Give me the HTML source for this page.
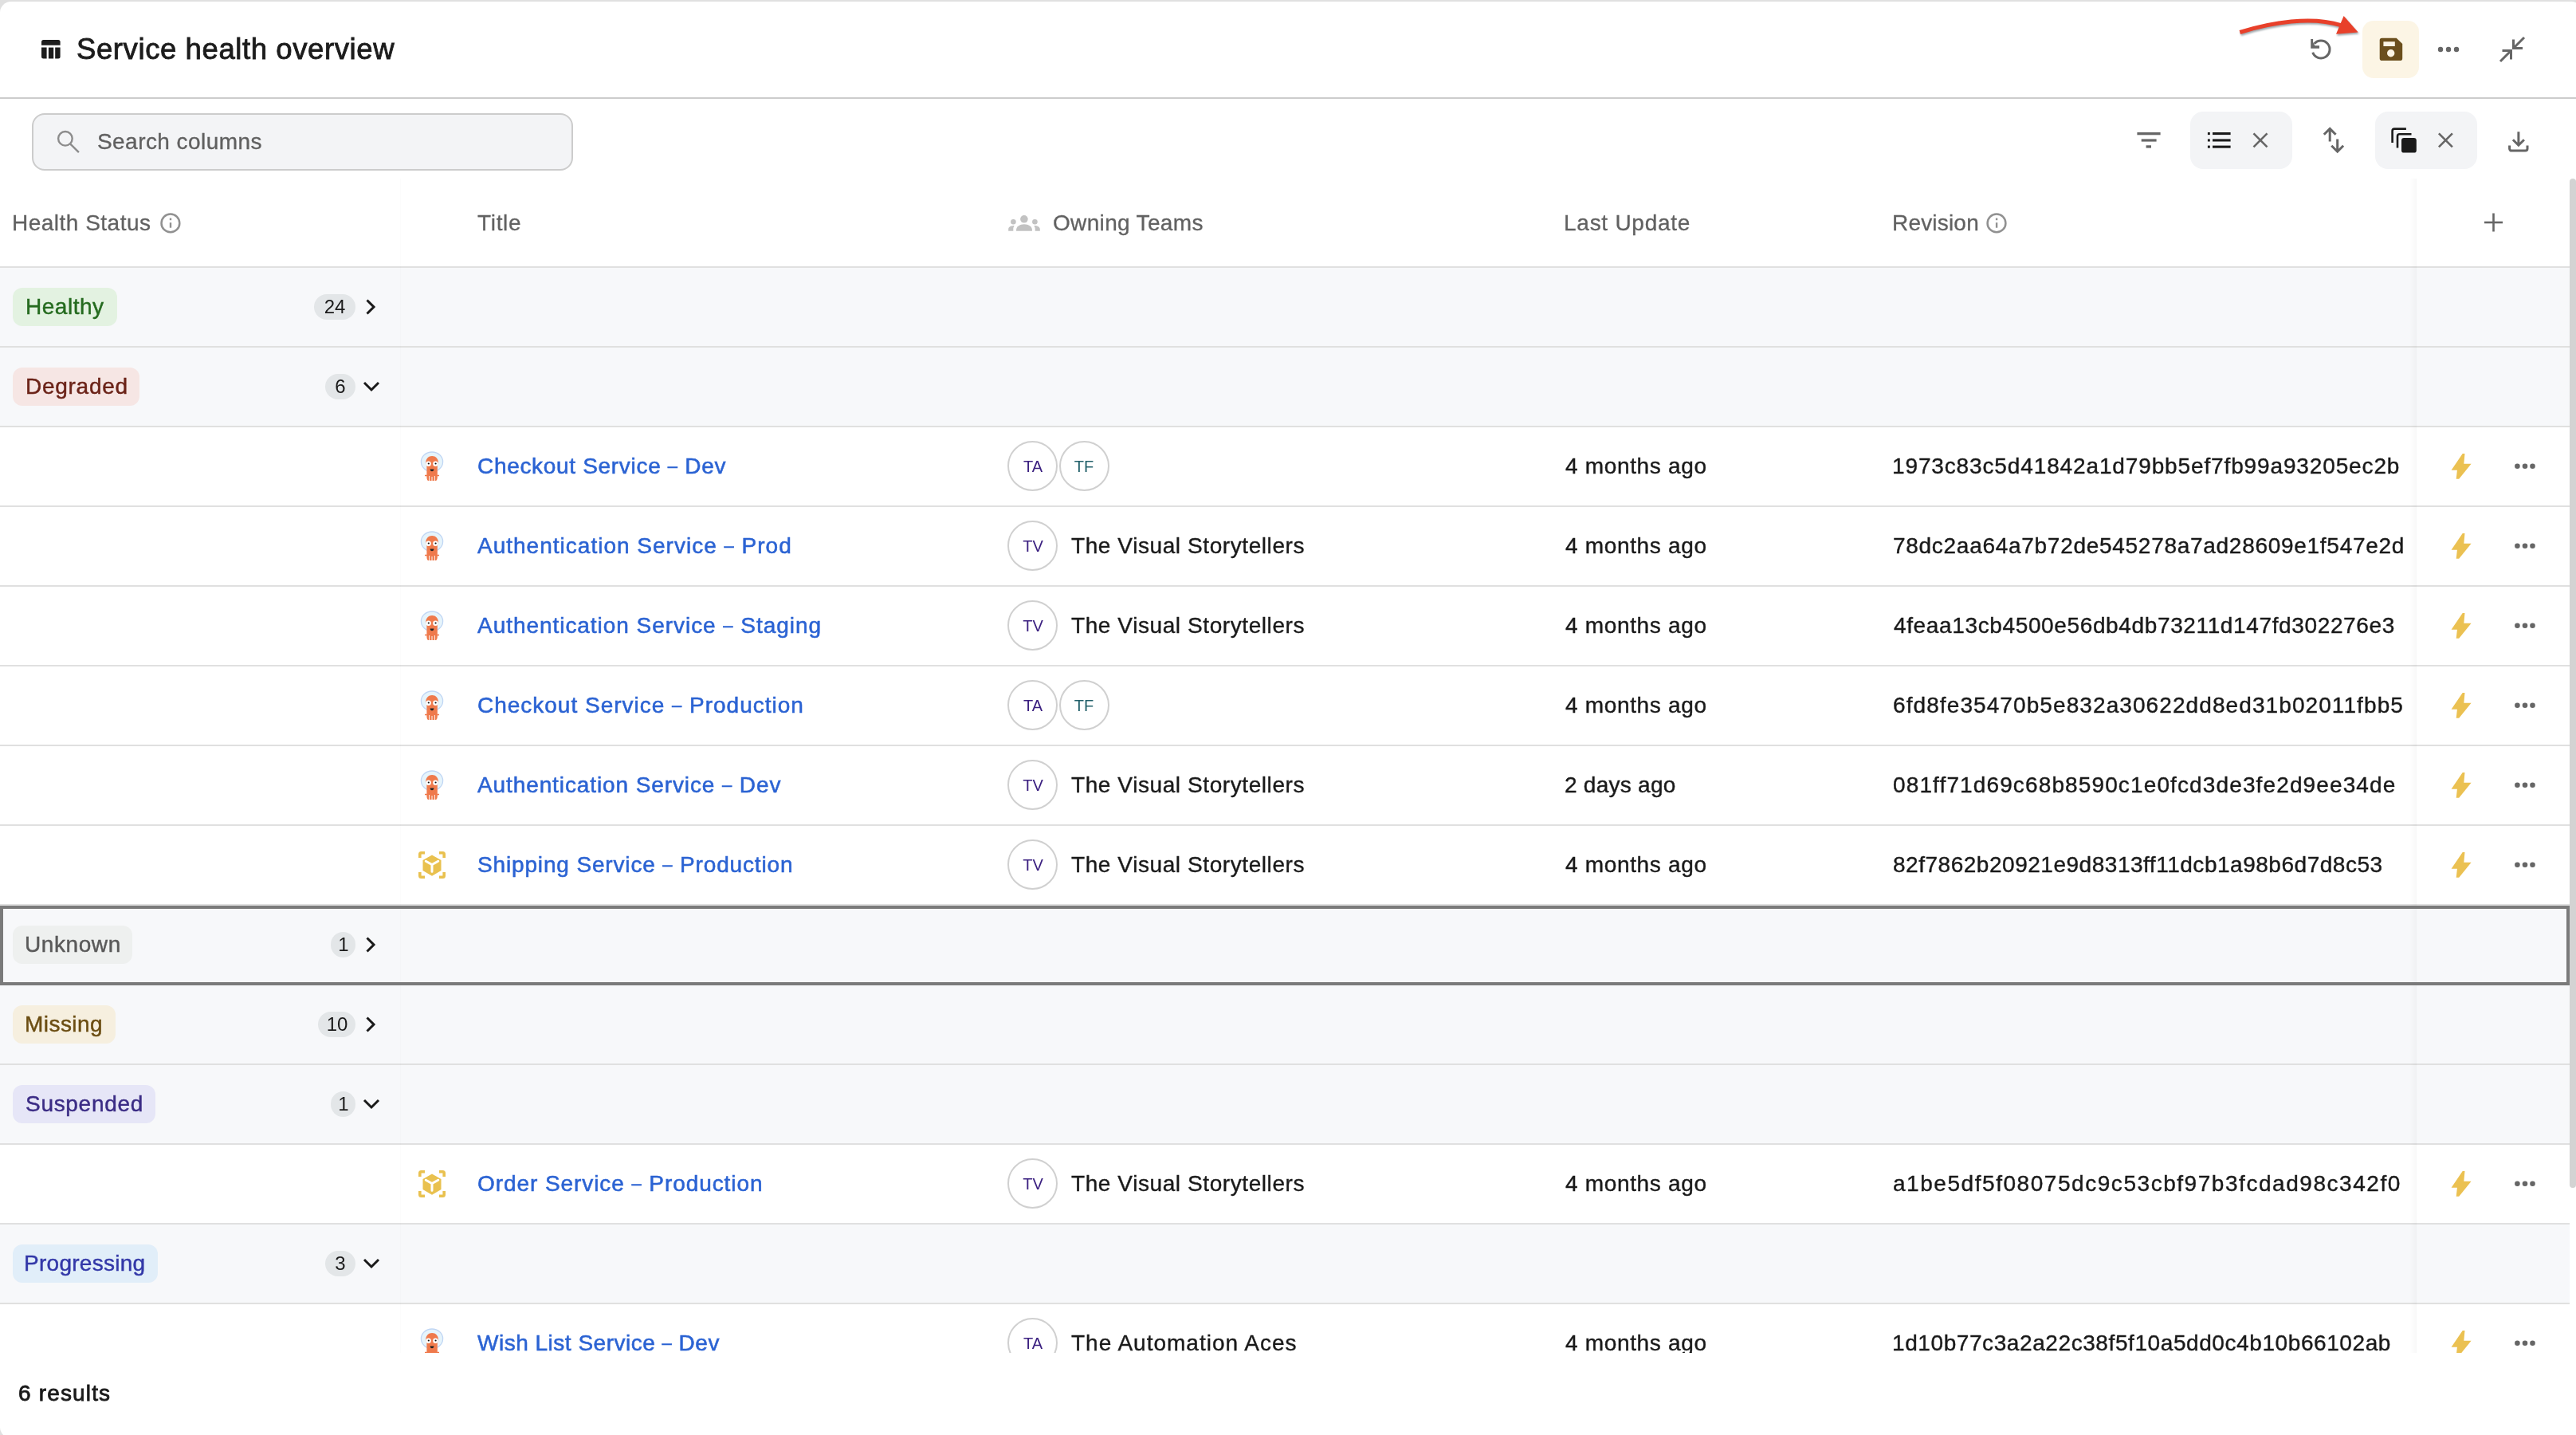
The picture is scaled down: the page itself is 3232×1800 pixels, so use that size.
<!DOCTYPE html>
<html><head><meta charset="utf-8"><title>Service health overview</title>
<style>
html,body{margin:0;padding:0;width:3232px;height:1800px;overflow:hidden;background:#e0e0e0;font-family:"Liberation Sans", sans-serif;}
.t{position:absolute;white-space:pre;line-height:1;will-change:transform;}
.r{position:absolute;}
.d{font-size:22px;vertical-align:2px;}
.a{position:absolute;left:0;top:0;overflow:visible;}
.clip{position:absolute;left:0;top:0;width:3232px;height:1697px;overflow:hidden;}
</style></head><body>
<div class="r" style="left:0;top:2px;width:3240px;height:1802px;background:#fff;border-radius:14px 14px 0 14px"></div><svg class="a" width="3232" height="130" viewBox="0 0 3232 130">
<path d="M52 56.7V52.5a2.5 2.5 0 0 1 2.5-2.5h18.6a2.5 2.5 0 0 1 2.5 2.5v4.2z" fill="#1c1c1c"/>
<path d="M52 59.6h6.6v13.9h-4.1a2.5 2.5 0 0 1-2.5-2.5z" fill="#1c1c1c"/>
<rect x="60.9" y="59.6" width="6.3" height="13.9" fill="#1c1c1c"/>
<path d="M69.2 59.6h6.4v11.4a2.5 2.5 0 0 1-2.5 2.5h-3.9z" fill="#1c1c1c"/>
<g fill="none" stroke="#666" stroke-width="3">

<path d="M2903.6 54.9A11 11 0 1 1 2901.7 65.8"/>
</g>
<path d="M2899.2 49.1h2.9v4l2.3 4.1h5.6v3.5h-10.8z" fill="#666"/>
<g fill="#666"><circle cx="3062" cy="62" r="3.2"/><circle cx="3072" cy="62" r="3.2"/><circle cx="3082" cy="62" r="3.2"/></g>
<g fill="none" stroke="#666" stroke-width="3">
<path d="M3167 47L3153.5 60.5M3153.5 49.5V60.5H3165"/>
<path d="M3137 77L3150.5 63.5M3139.5 63.5H3150.5V74.5"/>
</g>
</svg><div class="t" id="t0" style="left:96.18px;top:43.90px;font-size:36.5px;color:#1c1c1c;-webkit-text-stroke:0.85px #1c1c1c;letter-spacing:0.594px;">Service health overview</div><div class="r" style="left:2964px;top:26px;width:71px;height:72px;background:#fcf5e5;border-radius:14px;"></div><svg class="a" width="3232" height="130" viewBox="0 0 3232 130">
<path d="M2988.5 47.7h18.2l7.5 7.3v18.2a2.8 2.8 0 0 1-2.8 2.8h-22.9a2.8 2.8 0 0 1-2.8-2.8v-22.7a2.8 2.8 0 0 1 2.8-2.8zM2990.4 52.2v5.9h14.4v-5.9z" fill="#6b4f1d" fill-rule="evenodd"/>
<circle cx="2999.7" cy="66.7" r="4.7" fill="#fcf5e5"/>
</svg><div class="r" style="left:0px;top:122px;width:3232px;height:2px;background:#cccccc;border-radius:0px;"></div><svg class="a" width="3232" height="130" viewBox="0 0 3232 130" style="filter:drop-shadow(1.5px 2.5px 1.2px rgba(40,60,70,0.45))">
<path d="M2810.3 40.5C2850 28 2900 20 2937 31.7" fill="none" stroke="#e8402a" stroke-width="5"/>
<path d="M2940.6 19.9L2958.7 40.5L2931 42.8z" fill="#e8402a"/>
</svg><div class="r" style="left:40px;top:142px;width:679px;height:72px;background:#f3f4f6;border-radius:16px;box-sizing:border-box;border:2px solid #cccccc;"></div><svg class="a" width="3232" height="230" viewBox="0 0 3232 230">
<g fill="none" stroke="#8c8c8c" stroke-width="2.4"><circle cx="81.9" cy="173.8" r="8.8"/><path d="M88.3 180.6l10.6 10.6"/></g>
<g fill="#666"><rect x="2681.4" y="166" width="29.2" height="3.3"/><rect x="2686.7" y="174.4" width="18.9" height="3.2"/><rect x="2692.6" y="182.3" width="6.4" height="3.3"/></g>
</svg><div class="t" id="t1" style="left:122.02px;top:163.60px;font-size:28px;color:#606060;-webkit-text-stroke:0.35px #606060;letter-spacing:0.437px;">Search columns</div><div class="r" style="left:2748px;top:140px;width:128px;height:72px;background:#f3f4f6;border-radius:16px;"></div><div class="r" style="left:2980px;top:140px;width:128px;height:72px;background:#f3f4f6;border-radius:16px;"></div><svg class="a" width="3232" height="230" viewBox="0 0 3232 230">
<g fill="#1a1a1a"><rect x="2769.9" y="166" width="2.9" height="3.1"/><rect x="2769.9" y="174.4" width="2.9" height="3.1"/><rect x="2769.9" y="182.6" width="2.9" height="3.1"/>
<rect x="2776" y="166" width="22.6" height="3.1"/><rect x="2776" y="174.4" width="22.6" height="3.1"/><rect x="2776" y="182.6" width="22.6" height="3.1"/></g>
<g fill="none" stroke="#666" stroke-width="2.6"><path d="M2827.5 167.3l17 17M2844.5 167.3l-17 17"/><path d="M3059.9 167.3l17 17M3076.9 167.3l-17 17"/></g>
<g fill="none" stroke="#666" stroke-width="3"><path d="M2923.2 177.5V162M2915.8 168.8l7.4-7.4 7.4 7.4"/><path d="M2932.7 174.4V190M2925.3 182.8l7.4 7.4 7.4-7.4"/></g>
<g fill="none" stroke="#1a1a1a" stroke-width="2.6"><path d="M3001.6 178.9V164.2a2.6 2.6 0 0 1 2.6-2.6h14.7"/><path d="M3008 185.5V170.8a2.6 2.6 0 0 1 2.6-2.6h14.9"/></g>
<rect x="3013" y="173" width="18.8" height="18.6" rx="3.2" fill="#1a1a1a"/>
<g fill="none" stroke="#666" stroke-width="3"><path d="M3159.9 165.2V182M3152.9 175.2l7 7 7-7"/><path d="M3148.6 182.6V186.5a2.6 2.6 0 0 0 2.6 2.6h17.2a2.6 2.6 0 0 0 2.6-2.6V182.6"/></g>
</svg><div class="t" id="t2" style="left:15.36px;top:265.70px;font-size:28px;color:#616161;-webkit-text-stroke:0.3px #616161;letter-spacing:0.489px;">Health Status</div><div class="t" id="t3" style="left:599.24px;top:265.70px;font-size:28px;color:#616161;-webkit-text-stroke:0.3px #616161;letter-spacing:0.680px;">Title</div><div class="t" id="t4" style="left:1321.20px;top:265.70px;font-size:28px;color:#616161;-webkit-text-stroke:0.3px #616161;letter-spacing:0.339px;">Owning Teams</div><div class="t" id="t5" style="left:1961.96px;top:265.70px;font-size:28px;color:#616161;-webkit-text-stroke:0.3px #616161;letter-spacing:0.741px;">Last Update</div><div class="t" id="t6" style="left:2373.70px;top:265.70px;font-size:28px;color:#616161;-webkit-text-stroke:0.3px #616161;letter-spacing:0.189px;">Revision</div><svg class="a" width="3232" height="340" viewBox="0 0 3232 340">
<g fill="none" stroke="#919191" stroke-width="2.5"><circle cx="213.9" cy="279.9" r="11.4"/><circle cx="2505" cy="279.9" r="11.4"/></g>
<g fill="#919191"><rect x="212.8" y="273.6" width="2.4" height="2.6"/><rect x="212.8" y="279.2" width="2.4" height="6.5"/>
<rect x="2503.9" y="273.6" width="2.4" height="2.6"/><rect x="2503.9" y="279.2" width="2.4" height="6.5"/></g>
<g fill="#c2c2c2"><circle cx="1284.9" cy="274.8" r="4.8"/><circle cx="1271.4" cy="278.3" r="3.3"/><circle cx="1298.4" cy="278.3" r="3.3"/>
<path d="M1275.1 289.8v-1.6c0-4 4.4-7 9.9-7s9.9 3 9.9 7v1.6z"/>
<path d="M1265.2 289.8v-2.2c0-2.6 2.6-4.5 7.5-4.5c-.9 1.3-1.4 2.6-1.4 4.2v2.5z"/>
<path d="M1304.8 289.8v-2.2c0-2.6-2.6-4.5-7.5-4.5c.9 1.3 1.4 2.6 1.4 4.2v2.5z"/></g>
<g fill="#666"><rect x="3117" y="277.7" width="23" height="2.6"/><rect x="3127.2" y="267.5" width="2.6" height="23"/></g>
</svg><div class="r" style="left:0px;top:334px;width:3224px;height:2px;background:#e0e0e0;border-radius:0px;"></div><div class="clip"><div class="r" style="left:0px;top:336px;width:3224px;height:98px;background:#f7f8fa;border-radius:0px;"></div><div class="r" style="left:16px;top:361px;width:131px;height:48px;background:#e3f2e1;border-radius:12px;"></div><div class="t" id="t7" style="left:31.64px;top:370.80px;font-size:28px;color:#256b1f;-webkit-text-stroke:0.45px #256b1f;letter-spacing:0.527px;">Healthy</div><div class="r" style="left:394px;top:369px;width:52px;height:32px;background:#e3e6e8;border-radius:16px;"></div><div class="t" id="t8" style="left:420.00px;top:372.68px;font-size:24px;color:#1a1a1a;transform:translateX(-50%);">24</div><div class="r" style="left:0px;top:434px;width:3224px;height:2px;background:#e0e0e0;border-radius:0px;"></div><div class="r" style="left:0px;top:436px;width:3224px;height:98px;background:#f7f8fa;border-radius:0px;"></div><div class="r" style="left:16px;top:461px;width:159px;height:48px;background:#f6e6e4;border-radius:12px;"></div><div class="t" id="t9" style="left:31.64px;top:470.80px;font-size:28px;color:#6b2318;-webkit-text-stroke:0.45px #6b2318;letter-spacing:0.723px;">Degraded</div><div class="r" style="left:408px;top:469px;width:38px;height:32px;background:#e3e6e8;border-radius:16px;"></div><div class="t" id="t10" style="left:427.00px;top:472.68px;font-size:24px;color:#1a1a1a;transform:translateX(-50%);">6</div><div class="r" style="left:0px;top:534px;width:3224px;height:2px;background:#e0e0e0;border-radius:0px;"></div><div class="t" id="t11" style="left:598.68px;top:571.20px;font-size:28px;color:#2b63d3;-webkit-text-stroke:0.55px #2b63d3;letter-spacing:0.685px;">Checkout Service <span class="d">–</span> Dev</div><div class="r" style="left:1264.1px;top:553.3px;width:63px;height:63px;box-sizing:border-box;border:2px solid #d0d0d0;border-radius:50%;background:#fff"></div><div class="t" id="t12" style="left:1295.60px;top:575.07px;font-size:20px;color:#3b2080;transform:translateX(-50%);">TA</div><div class="r" style="left:1328.8px;top:553.3px;width:63px;height:63px;box-sizing:border-box;border:2px solid #d0d0d0;border-radius:50%;background:#fff"></div><div class="t" id="t13" style="left:1360.30px;top:575.07px;font-size:20px;color:#22606a;transform:translateX(-50%);">TF</div><div class="t" id="t14" style="left:1963.60px;top:571.30px;font-size:28px;color:#1a1a1a;-webkit-text-stroke:0.4px #1a1a1a;letter-spacing:0.667px;">4 months ago</div><div class="t" id="t15" style="left:2373.70px;top:571.30px;font-size:28px;color:#1a1a1a;-webkit-text-stroke:0.4px #1a1a1a;letter-spacing:0.867px;">1973c83c5d41842a1d79bb5ef7fb99a93205ec2b</div><div class="r" style="left:0px;top:634px;width:3224px;height:2px;background:#e0e0e0;border-radius:0px;"></div><div class="t" id="t16" style="left:599.48px;top:671.20px;font-size:28px;color:#2b63d3;-webkit-text-stroke:0.55px #2b63d3;letter-spacing:1.006px;">Authentication Service <span class="d">–</span> Prod</div><div class="r" style="left:1264.1px;top:653.3px;width:63px;height:63px;box-sizing:border-box;border:2px solid #d0d0d0;border-radius:50%;background:#fff"></div><div class="t" id="t17" style="left:1295.60px;top:675.07px;font-size:20px;color:#3b2080;transform:translateX(-50%);">TV</div><div class="t" id="t18" style="left:1344.00px;top:671.00px;font-size:28px;color:#1a1a1a;-webkit-text-stroke:0.4px #1a1a1a;letter-spacing:0.586px;">The Visual Storytellers</div><div class="t" id="t19" style="left:1963.60px;top:671.30px;font-size:28px;color:#1a1a1a;-webkit-text-stroke:0.4px #1a1a1a;letter-spacing:0.667px;">4 months ago</div><div class="t" id="t20" style="left:2374.50px;top:671.30px;font-size:28px;color:#1a1a1a;-webkit-text-stroke:0.4px #1a1a1a;letter-spacing:0.714px;">78dc2aa64a7b72de545278a7ad28609e1f547e2d</div><div class="r" style="left:0px;top:734px;width:3224px;height:2px;background:#e0e0e0;border-radius:0px;"></div><div class="t" id="t21" style="left:599.48px;top:771.20px;font-size:28px;color:#2b63d3;-webkit-text-stroke:0.55px #2b63d3;letter-spacing:0.955px;">Authentication Service <span class="d">–</span> Staging</div><div class="r" style="left:1264.1px;top:753.3px;width:63px;height:63px;box-sizing:border-box;border:2px solid #d0d0d0;border-radius:50%;background:#fff"></div><div class="t" id="t22" style="left:1295.60px;top:775.07px;font-size:20px;color:#3b2080;transform:translateX(-50%);">TV</div><div class="t" id="t23" style="left:1344.00px;top:771.00px;font-size:28px;color:#1a1a1a;-webkit-text-stroke:0.4px #1a1a1a;letter-spacing:0.586px;">The Visual Storytellers</div><div class="t" id="t24" style="left:1963.60px;top:771.30px;font-size:28px;color:#1a1a1a;-webkit-text-stroke:0.4px #1a1a1a;letter-spacing:0.667px;">4 months ago</div><div class="t" id="t25" style="left:2376.10px;top:771.30px;font-size:28px;color:#1a1a1a;-webkit-text-stroke:0.4px #1a1a1a;letter-spacing:0.632px;">4feaa13cb4500e56db4db73211d147fd302276e3</div><div class="r" style="left:0px;top:834px;width:3224px;height:2px;background:#e0e0e0;border-radius:0px;"></div><div class="t" id="t26" style="left:598.68px;top:871.20px;font-size:28px;color:#2b63d3;-webkit-text-stroke:0.55px #2b63d3;letter-spacing:0.989px;">Checkout Service <span class="d">–</span> Production</div><div class="r" style="left:1264.1px;top:853.3px;width:63px;height:63px;box-sizing:border-box;border:2px solid #d0d0d0;border-radius:50%;background:#fff"></div><div class="t" id="t27" style="left:1295.60px;top:875.07px;font-size:20px;color:#3b2080;transform:translateX(-50%);">TA</div><div class="r" style="left:1328.8px;top:853.3px;width:63px;height:63px;box-sizing:border-box;border:2px solid #d0d0d0;border-radius:50%;background:#fff"></div><div class="t" id="t28" style="left:1360.30px;top:875.07px;font-size:20px;color:#22606a;transform:translateX(-50%);">TF</div><div class="t" id="t29" style="left:1963.60px;top:871.30px;font-size:28px;color:#1a1a1a;-webkit-text-stroke:0.4px #1a1a1a;letter-spacing:0.667px;">4 months ago</div><div class="t" id="t30" style="left:2374.50px;top:871.30px;font-size:28px;color:#1a1a1a;-webkit-text-stroke:0.4px #1a1a1a;letter-spacing:1.088px;">6fd8fe35470b5e832a30622dd8ed31b02011fbb5</div><div class="r" style="left:0px;top:934px;width:3224px;height:2px;background:#e0e0e0;border-radius:0px;"></div><div class="t" id="t31" style="left:599.48px;top:971.20px;font-size:28px;color:#2b63d3;-webkit-text-stroke:0.55px #2b63d3;letter-spacing:0.895px;">Authentication Service <span class="d">–</span> Dev</div><div class="r" style="left:1264.1px;top:953.3px;width:63px;height:63px;box-sizing:border-box;border:2px solid #d0d0d0;border-radius:50%;background:#fff"></div><div class="t" id="t32" style="left:1295.60px;top:975.07px;font-size:20px;color:#3b2080;transform:translateX(-50%);">TV</div><div class="t" id="t33" style="left:1344.00px;top:971.00px;font-size:28px;color:#1a1a1a;-webkit-text-stroke:0.4px #1a1a1a;letter-spacing:0.586px;">The Visual Storytellers</div><div class="t" id="t34" style="left:1962.80px;top:971.30px;font-size:28px;color:#1a1a1a;-webkit-text-stroke:0.4px #1a1a1a;letter-spacing:0.254px;">2 days ago</div><div class="t" id="t35" style="left:2374.50px;top:971.30px;font-size:28px;color:#1a1a1a;-webkit-text-stroke:0.4px #1a1a1a;letter-spacing:1.124px;">081ff71d69c68b8590c1e0fcd3de3fe2d9ee34de</div><div class="r" style="left:0px;top:1034px;width:3224px;height:2px;background:#e0e0e0;border-radius:0px;"></div><div class="t" id="t36" style="left:598.68px;top:1071.20px;font-size:28px;color:#2b63d3;-webkit-text-stroke:0.55px #2b63d3;letter-spacing:0.847px;">Shipping Service <span class="d">–</span> Production</div><div class="r" style="left:1264.1px;top:1053.3px;width:63px;height:63px;box-sizing:border-box;border:2px solid #d0d0d0;border-radius:50%;background:#fff"></div><div class="t" id="t37" style="left:1295.60px;top:1075.07px;font-size:20px;color:#3b2080;transform:translateX(-50%);">TV</div><div class="t" id="t38" style="left:1344.00px;top:1071.00px;font-size:28px;color:#1a1a1a;-webkit-text-stroke:0.4px #1a1a1a;letter-spacing:0.586px;">The Visual Storytellers</div><div class="t" id="t39" style="left:1963.60px;top:1071.30px;font-size:28px;color:#1a1a1a;-webkit-text-stroke:0.4px #1a1a1a;letter-spacing:0.667px;">4 months ago</div><div class="t" id="t40" style="left:2374.50px;top:1071.30px;font-size:28px;color:#1a1a1a;-webkit-text-stroke:0.4px #1a1a1a;letter-spacing:0.521px;">82f7862b20921e9d8313ff11dcb1a98b6d7d8c53</div><div class="r" style="left:0px;top:1134px;width:3224px;height:2px;background:#e0e0e0;border-radius:0px;"></div><div class="r" style="left:0px;top:1136px;width:3224px;height:98px;background:#f7f8fa;border-radius:0px;"></div><div class="r" style="left:16px;top:1161px;width:149.5px;height:48px;background:#eef0ef;border-radius:12px;"></div><div class="t" id="t41" style="left:30.68px;top:1170.80px;font-size:28px;color:#5a5a5a;-webkit-text-stroke:0.45px #5a5a5a;letter-spacing:0.587px;">Unknown</div><div class="r" style="left:415px;top:1169px;width:31px;height:32px;background:#e3e6e8;border-radius:16px;"></div><div class="t" id="t42" style="left:430.50px;top:1172.68px;font-size:24px;color:#1a1a1a;transform:translateX(-50%);">1</div><div class="r" style="left:0px;top:1234px;width:3224px;height:2px;background:#e0e0e0;border-radius:0px;"></div><div class="r" style="left:0px;top:1236px;width:3224px;height:98px;background:#f7f8fa;border-radius:0px;"></div><div class="r" style="left:16px;top:1261px;width:128.5px;height:48px;background:#f6efdf;border-radius:12px;"></div><div class="t" id="t43" style="left:31.00px;top:1270.80px;font-size:28px;color:#6b4d12;-webkit-text-stroke:0.45px #6b4d12;letter-spacing:0.453px;">Missing</div><div class="r" style="left:399px;top:1269px;width:47px;height:32px;background:#e3e6e8;border-radius:16px;"></div><div class="t" id="t44" style="left:422.50px;top:1272.68px;font-size:24px;color:#1a1a1a;transform:translateX(-50%);">10</div><div class="r" style="left:0px;top:1334px;width:3224px;height:2px;background:#e0e0e0;border-radius:0px;"></div><div class="r" style="left:0px;top:1336px;width:3224px;height:98px;background:#f7f8fa;border-radius:0px;"></div><div class="r" style="left:16px;top:1361px;width:178.5px;height:48px;background:#e6e6f7;border-radius:12px;"></div><div class="t" id="t45" style="left:31.80px;top:1370.80px;font-size:28px;color:#3b2c85;-webkit-text-stroke:0.45px #3b2c85;letter-spacing:0.700px;">Suspended</div><div class="r" style="left:415px;top:1369px;width:31px;height:32px;background:#e3e6e8;border-radius:16px;"></div><div class="t" id="t46" style="left:430.50px;top:1372.68px;font-size:24px;color:#1a1a1a;transform:translateX(-50%);">1</div><div class="r" style="left:0px;top:1434px;width:3224px;height:2px;background:#e0e0e0;border-radius:0px;"></div><div class="t" id="t47" style="left:598.68px;top:1471.20px;font-size:28px;color:#2b63d3;-webkit-text-stroke:0.55px #2b63d3;letter-spacing:0.926px;">Order Service <span class="d">–</span> Production</div><div class="r" style="left:1264.1px;top:1453.3px;width:63px;height:63px;box-sizing:border-box;border:2px solid #d0d0d0;border-radius:50%;background:#fff"></div><div class="t" id="t48" style="left:1295.60px;top:1475.07px;font-size:20px;color:#3b2080;transform:translateX(-50%);">TV</div><div class="t" id="t49" style="left:1344.00px;top:1471.00px;font-size:28px;color:#1a1a1a;-webkit-text-stroke:0.4px #1a1a1a;letter-spacing:0.586px;">The Visual Storytellers</div><div class="t" id="t50" style="left:1963.60px;top:1471.30px;font-size:28px;color:#1a1a1a;-webkit-text-stroke:0.4px #1a1a1a;letter-spacing:0.667px;">4 months ago</div><div class="t" id="t51" style="left:2374.50px;top:1471.30px;font-size:28px;color:#1a1a1a;-webkit-text-stroke:0.4px #1a1a1a;letter-spacing:1.546px;">a1be5df5f08075dc9c53cbf97b3fcdad98c342f0</div><div class="r" style="left:0px;top:1534px;width:3224px;height:2px;background:#e0e0e0;border-radius:0px;"></div><div class="r" style="left:0px;top:1536px;width:3224px;height:98px;background:#f7f8fa;border-radius:0px;"></div><div class="r" style="left:16px;top:1561px;width:182px;height:48px;background:#e1eef9;border-radius:12px;"></div><div class="t" id="t52" style="left:30.36px;top:1570.80px;font-size:28px;color:#3338a8;-webkit-text-stroke:0.45px #3338a8;letter-spacing:0.272px;">Progressing</div><div class="r" style="left:408px;top:1569px;width:38px;height:32px;background:#e3e6e8;border-radius:16px;"></div><div class="t" id="t53" style="left:427.00px;top:1572.68px;font-size:24px;color:#1a1a1a;transform:translateX(-50%);">3</div><div class="r" style="left:0px;top:1634px;width:3224px;height:2px;background:#e0e0e0;border-radius:0px;"></div><div class="t" id="t54" style="left:599.48px;top:1671.20px;font-size:28px;color:#2b63d3;-webkit-text-stroke:0.55px #2b63d3;letter-spacing:0.503px;">Wish List Service <span class="d">–</span> Dev</div><div class="r" style="left:1264.1px;top:1653.3px;width:63px;height:63px;box-sizing:border-box;border:2px solid #d0d0d0;border-radius:50%;background:#fff"></div><div class="t" id="t55" style="left:1295.60px;top:1675.07px;font-size:20px;color:#3b2080;transform:translateX(-50%);">TA</div><div class="t" id="t56" style="left:1344.00px;top:1671.00px;font-size:28px;color:#1a1a1a;-webkit-text-stroke:0.4px #1a1a1a;letter-spacing:0.992px;">The Automation Aces</div><div class="t" id="t57" style="left:1963.60px;top:1671.30px;font-size:28px;color:#1a1a1a;-webkit-text-stroke:0.4px #1a1a1a;letter-spacing:0.667px;">4 months ago</div><div class="t" id="t58" style="left:2373.70px;top:1671.30px;font-size:28px;color:#1a1a1a;-webkit-text-stroke:0.4px #1a1a1a;letter-spacing:0.585px;">1d10b77c3a2a22c38f5f10a5dd0c4b10b66102ab</div><div class="r" style="left:0px;top:1734px;width:3224px;height:2px;background:#e0e0e0;border-radius:0px;"></div><svg class="a" width="3232" height="1800" viewBox="0 0 3232 1800"><path d="M460.5 376.5l8.5 8.5-8.5 8.5" fill="none" stroke="#1a1a1a" stroke-width="3"/><path d="M457 480l9 9 9-9" fill="none" stroke="#1a1a1a" stroke-width="3"/><g transform="translate(0 0)">
<ellipse cx="542" cy="579.3" rx="13.6" ry="12.3" fill="#e6f4fb" stroke="#c0d6f4" stroke-width="1.3"/>
<path d="M534.3 580c0-4.6 3.4-8 7.8-8s7.8 3.4 7.8 8l-1.1 5v13.5c0 2.5-.8 4.5-2.2 4.5h-9c-1.4 0-2.2-2-2.2-4.5v-13.5z" fill="#ef7a4c"/>
<path d="M533 596.5h18" stroke="#ef7a4c" stroke-width="1.5"/>
<circle cx="537.6" cy="581.8" r="3.2" fill="#fff"/><circle cx="546.4" cy="581.8" r="3.2" fill="#fff"/>
<circle cx="537.8" cy="581.5" r="1.1" fill="#111"/><circle cx="546.6" cy="581.5" r="1.1" fill="#111"/>
<path d="M539.6 588.5h4.8c0 1.6-1 2.8-2.4 2.8s-2.4-1.2-2.4-2.8z" fill="#222"/>
<path d="M538.6 597v6.5M542 598v5.5M545.4 597v6.5" stroke="#fff" stroke-width="0.9"/>
</g><g transform="translate(0 0)">
<path d="M3089.7 569.1h2.8l-1.2 12.6h9.3l-15.4 19.1h-3.5l1.2-11h-7.3z" fill="#ebc152"/>
<g fill="#666"><circle cx="3158.4" cy="584.7" r="3.3"/><circle cx="3168" cy="584.7" r="3.3"/><circle cx="3177.5" cy="584.7" r="3.3"/></g>
</g><g transform="translate(0 100)">
<ellipse cx="542" cy="579.3" rx="13.6" ry="12.3" fill="#e6f4fb" stroke="#c0d6f4" stroke-width="1.3"/>
<path d="M534.3 580c0-4.6 3.4-8 7.8-8s7.8 3.4 7.8 8l-1.1 5v13.5c0 2.5-.8 4.5-2.2 4.5h-9c-1.4 0-2.2-2-2.2-4.5v-13.5z" fill="#ef7a4c"/>
<path d="M533 596.5h18" stroke="#ef7a4c" stroke-width="1.5"/>
<circle cx="537.6" cy="581.8" r="3.2" fill="#fff"/><circle cx="546.4" cy="581.8" r="3.2" fill="#fff"/>
<circle cx="537.8" cy="581.5" r="1.1" fill="#111"/><circle cx="546.6" cy="581.5" r="1.1" fill="#111"/>
<path d="M539.6 588.5h4.8c0 1.6-1 2.8-2.4 2.8s-2.4-1.2-2.4-2.8z" fill="#222"/>
<path d="M538.6 597v6.5M542 598v5.5M545.4 597v6.5" stroke="#fff" stroke-width="0.9"/>
</g><g transform="translate(0 100)">
<path d="M3089.7 569.1h2.8l-1.2 12.6h9.3l-15.4 19.1h-3.5l1.2-11h-7.3z" fill="#ebc152"/>
<g fill="#666"><circle cx="3158.4" cy="584.7" r="3.3"/><circle cx="3168" cy="584.7" r="3.3"/><circle cx="3177.5" cy="584.7" r="3.3"/></g>
</g><g transform="translate(0 200)">
<ellipse cx="542" cy="579.3" rx="13.6" ry="12.3" fill="#e6f4fb" stroke="#c0d6f4" stroke-width="1.3"/>
<path d="M534.3 580c0-4.6 3.4-8 7.8-8s7.8 3.4 7.8 8l-1.1 5v13.5c0 2.5-.8 4.5-2.2 4.5h-9c-1.4 0-2.2-2-2.2-4.5v-13.5z" fill="#ef7a4c"/>
<path d="M533 596.5h18" stroke="#ef7a4c" stroke-width="1.5"/>
<circle cx="537.6" cy="581.8" r="3.2" fill="#fff"/><circle cx="546.4" cy="581.8" r="3.2" fill="#fff"/>
<circle cx="537.8" cy="581.5" r="1.1" fill="#111"/><circle cx="546.6" cy="581.5" r="1.1" fill="#111"/>
<path d="M539.6 588.5h4.8c0 1.6-1 2.8-2.4 2.8s-2.4-1.2-2.4-2.8z" fill="#222"/>
<path d="M538.6 597v6.5M542 598v5.5M545.4 597v6.5" stroke="#fff" stroke-width="0.9"/>
</g><g transform="translate(0 200)">
<path d="M3089.7 569.1h2.8l-1.2 12.6h9.3l-15.4 19.1h-3.5l1.2-11h-7.3z" fill="#ebc152"/>
<g fill="#666"><circle cx="3158.4" cy="584.7" r="3.3"/><circle cx="3168" cy="584.7" r="3.3"/><circle cx="3177.5" cy="584.7" r="3.3"/></g>
</g><g transform="translate(0 300)">
<ellipse cx="542" cy="579.3" rx="13.6" ry="12.3" fill="#e6f4fb" stroke="#c0d6f4" stroke-width="1.3"/>
<path d="M534.3 580c0-4.6 3.4-8 7.8-8s7.8 3.4 7.8 8l-1.1 5v13.5c0 2.5-.8 4.5-2.2 4.5h-9c-1.4 0-2.2-2-2.2-4.5v-13.5z" fill="#ef7a4c"/>
<path d="M533 596.5h18" stroke="#ef7a4c" stroke-width="1.5"/>
<circle cx="537.6" cy="581.8" r="3.2" fill="#fff"/><circle cx="546.4" cy="581.8" r="3.2" fill="#fff"/>
<circle cx="537.8" cy="581.5" r="1.1" fill="#111"/><circle cx="546.6" cy="581.5" r="1.1" fill="#111"/>
<path d="M539.6 588.5h4.8c0 1.6-1 2.8-2.4 2.8s-2.4-1.2-2.4-2.8z" fill="#222"/>
<path d="M538.6 597v6.5M542 598v5.5M545.4 597v6.5" stroke="#fff" stroke-width="0.9"/>
</g><g transform="translate(0 300)">
<path d="M3089.7 569.1h2.8l-1.2 12.6h9.3l-15.4 19.1h-3.5l1.2-11h-7.3z" fill="#ebc152"/>
<g fill="#666"><circle cx="3158.4" cy="584.7" r="3.3"/><circle cx="3168" cy="584.7" r="3.3"/><circle cx="3177.5" cy="584.7" r="3.3"/></g>
</g><g transform="translate(0 400)">
<ellipse cx="542" cy="579.3" rx="13.6" ry="12.3" fill="#e6f4fb" stroke="#c0d6f4" stroke-width="1.3"/>
<path d="M534.3 580c0-4.6 3.4-8 7.8-8s7.8 3.4 7.8 8l-1.1 5v13.5c0 2.5-.8 4.5-2.2 4.5h-9c-1.4 0-2.2-2-2.2-4.5v-13.5z" fill="#ef7a4c"/>
<path d="M533 596.5h18" stroke="#ef7a4c" stroke-width="1.5"/>
<circle cx="537.6" cy="581.8" r="3.2" fill="#fff"/><circle cx="546.4" cy="581.8" r="3.2" fill="#fff"/>
<circle cx="537.8" cy="581.5" r="1.1" fill="#111"/><circle cx="546.6" cy="581.5" r="1.1" fill="#111"/>
<path d="M539.6 588.5h4.8c0 1.6-1 2.8-2.4 2.8s-2.4-1.2-2.4-2.8z" fill="#222"/>
<path d="M538.6 597v6.5M542 598v5.5M545.4 597v6.5" stroke="#fff" stroke-width="0.9"/>
</g><g transform="translate(0 400)">
<path d="M3089.7 569.1h2.8l-1.2 12.6h9.3l-15.4 19.1h-3.5l1.2-11h-7.3z" fill="#ebc152"/>
<g fill="#666"><circle cx="3158.4" cy="584.7" r="3.3"/><circle cx="3168" cy="584.7" r="3.3"/><circle cx="3177.5" cy="584.7" r="3.3"/></g>
</g><g transform="translate(0 0)" fill="#e9c14f">
<path d="M525 1076v-4.5a3.5 3.5 0 0 1 3.5-3.5h4.5v3.6h-4.4v4.4z"/><path d="M559 1076v-4.5a3.5 3.5 0 0 0-3.5-3.5h-4.5v3.6h4.4v4.4z"/>
<path d="M525 1094v4.5a3.5 3.5 0 0 0 3.5 3.5h4.5v-3.6h-4.4v-4.4z"/><path d="M559 1094v4.5a3.5 3.5 0 0 1-3.5 3.5h-4.5v-3.6h4.4v-4.4z"/>
<path d="M542 1072.5l11.5 6.4v13.2l-11.5 6.6-11.5-6.6v-13.2z"/>
<path d="M534.3 1080.2l7.7 4.3 7.7-4.3M542 1084.5v8.8" fill="none" stroke="#fff" stroke-width="3" stroke-linecap="round"/>
</g><g transform="translate(0 500)">
<path d="M3089.7 569.1h2.8l-1.2 12.6h9.3l-15.4 19.1h-3.5l1.2-11h-7.3z" fill="#ebc152"/>
<g fill="#666"><circle cx="3158.4" cy="584.7" r="3.3"/><circle cx="3168" cy="584.7" r="3.3"/><circle cx="3177.5" cy="584.7" r="3.3"/></g>
</g><path d="M460.5 1176.5l8.5 8.5-8.5 8.5" fill="none" stroke="#1a1a1a" stroke-width="3"/><path d="M460.5 1276.5l8.5 8.5-8.5 8.5" fill="none" stroke="#1a1a1a" stroke-width="3"/><path d="M457 1380l9 9 9-9" fill="none" stroke="#1a1a1a" stroke-width="3"/><g transform="translate(0 400)" fill="#e9c14f">
<path d="M525 1076v-4.5a3.5 3.5 0 0 1 3.5-3.5h4.5v3.6h-4.4v4.4z"/><path d="M559 1076v-4.5a3.5 3.5 0 0 0-3.5-3.5h-4.5v3.6h4.4v4.4z"/>
<path d="M525 1094v4.5a3.5 3.5 0 0 0 3.5 3.5h4.5v-3.6h-4.4v-4.4z"/><path d="M559 1094v4.5a3.5 3.5 0 0 1-3.5 3.5h-4.5v-3.6h4.4v-4.4z"/>
<path d="M542 1072.5l11.5 6.4v13.2l-11.5 6.6-11.5-6.6v-13.2z"/>
<path d="M534.3 1080.2l7.7 4.3 7.7-4.3M542 1084.5v8.8" fill="none" stroke="#fff" stroke-width="3" stroke-linecap="round"/>
</g><g transform="translate(0 900)">
<path d="M3089.7 569.1h2.8l-1.2 12.6h9.3l-15.4 19.1h-3.5l1.2-11h-7.3z" fill="#ebc152"/>
<g fill="#666"><circle cx="3158.4" cy="584.7" r="3.3"/><circle cx="3168" cy="584.7" r="3.3"/><circle cx="3177.5" cy="584.7" r="3.3"/></g>
</g><path d="M457 1580l9 9 9-9" fill="none" stroke="#1a1a1a" stroke-width="3"/><g transform="translate(0 1100)">
<ellipse cx="542" cy="579.3" rx="13.6" ry="12.3" fill="#e6f4fb" stroke="#c0d6f4" stroke-width="1.3"/>
<path d="M534.3 580c0-4.6 3.4-8 7.8-8s7.8 3.4 7.8 8l-1.1 5v13.5c0 2.5-.8 4.5-2.2 4.5h-9c-1.4 0-2.2-2-2.2-4.5v-13.5z" fill="#ef7a4c"/>
<path d="M533 596.5h18" stroke="#ef7a4c" stroke-width="1.5"/>
<circle cx="537.6" cy="581.8" r="3.2" fill="#fff"/><circle cx="546.4" cy="581.8" r="3.2" fill="#fff"/>
<circle cx="537.8" cy="581.5" r="1.1" fill="#111"/><circle cx="546.6" cy="581.5" r="1.1" fill="#111"/>
<path d="M539.6 588.5h4.8c0 1.6-1 2.8-2.4 2.8s-2.4-1.2-2.4-2.8z" fill="#222"/>
<path d="M538.6 597v6.5M542 598v5.5M545.4 597v6.5" stroke="#fff" stroke-width="0.9"/>
</g><g transform="translate(0 1100)">
<path d="M3089.7 569.1h2.8l-1.2 12.6h9.3l-15.4 19.1h-3.5l1.2-11h-7.3z" fill="#ebc152"/>
<g fill="#666"><circle cx="3158.4" cy="584.7" r="3.3"/><circle cx="3168" cy="584.7" r="3.3"/><circle cx="3177.5" cy="584.7" r="3.3"/></g>
</g></svg><div class="r" style="left:3023px;top:224px;width:8px;height:1473px;background:linear-gradient(to right, rgba(0,0,0,0), rgba(0,0,0,0.025));border-radius:0px;"></div><div class="r" style="left:3031px;top:224px;width:1px;height:1473px;background:rgba(0,0,0,0.03);border-radius:0px;"></div><div class="r" style="left:502px;top:224px;width:1px;height:1473px;background:rgba(0,0,0,0.012);border-radius:0px;"></div><div class="r" style="left:0px;top:1136px;width:3224px;height:100px;background:transparent;border-radius:0px;box-sizing:border-box;border:4px solid #7a7a7a;"></div></div><div class="r" style="left:3224px;top:224px;width:8px;height:1266px;background:#d3d3d3;border-radius:4px;"></div><div class="t" id="t59" style="left:23.20px;top:1733.90px;font-size:28px;color:#1a1a1a;-webkit-text-stroke:0.8px #1a1a1a;letter-spacing:1.157px;">6 results</div>
</body></html>
